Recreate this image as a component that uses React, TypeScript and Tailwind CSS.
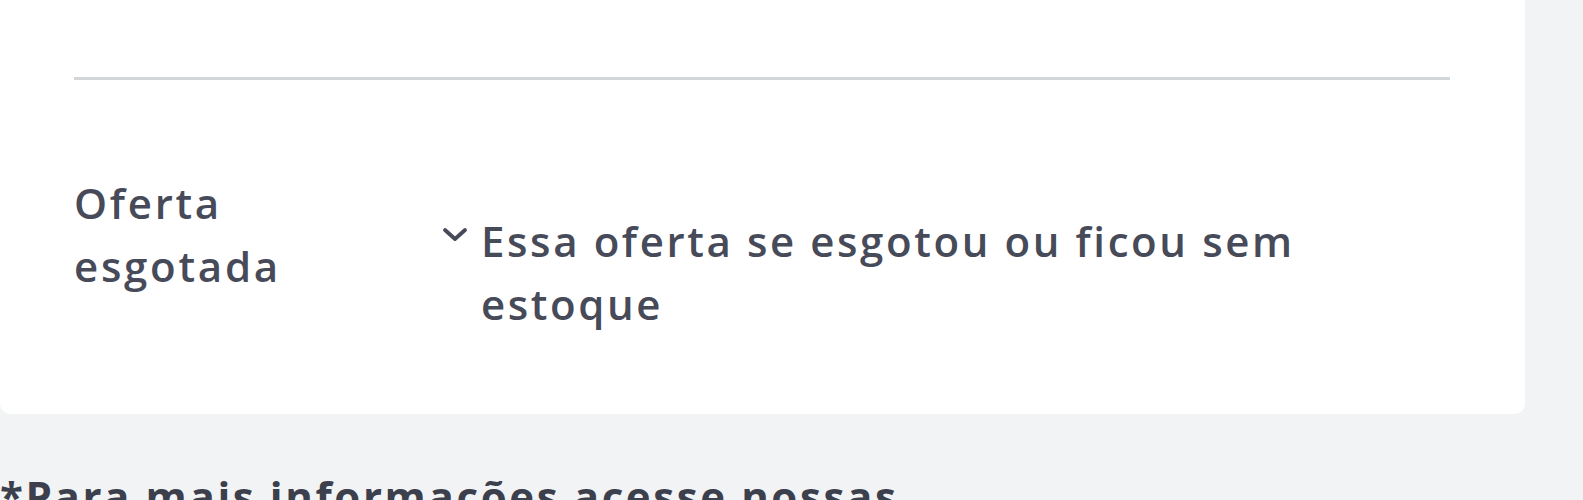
import React from "react";

export default function App() {
  return (
    <div
      className="w-[1583px] h-[500px] overflow-hidden bg-[#f2f3f5] text-[#474a58]"
      style={{ fontFamily: '"Open Sans", "Noto Sans", sans-serif' }}
    >
      <div className="w-[1525px] h-[414px] bg-white rounded-b-[10px] pt-[77px] pl-[74px]">
        <div className="w-[1376px] h-[3px] bg-[#d3d6d8]" />
        <div className="flex pt-[91px]">
          <div className="w-[367px] shrink-0 text-[42px] leading-[63px] font-semibold tracking-[0.065em]">
            Oferta
            <br />
            esgotada
          </div>
          <div className="flex items-start pt-[38px]">
            <div className="w-[40px] shrink-0 h-[63px] flex items-start pt-[18px] pl-[1px]">
              <svg width="26" height="16" viewBox="0 0 26 16" fill="none">
                <path
                  d="M3 3 L13 12 L23 3"
                  stroke="#474a58"
                  strokeWidth="3.8"
                  strokeLinecap="round"
                  strokeLinejoin="round"
                />
              </svg>
            </div>
            <div className="w-[860px] text-[42px] leading-[63px] font-semibold tracking-[0.062em]">
              Essa oferta se esgotou ou ficou sem estoque
            </div>
          </div>
        </div>
      </div>
      <div className="pt-[50px] text-[42px] leading-[63px] font-bold tracking-[0.062em] text-[#3c3f4c] whitespace-nowrap">
        *Para mais informações acesse nossas
      </div>
    </div>
  );
}
